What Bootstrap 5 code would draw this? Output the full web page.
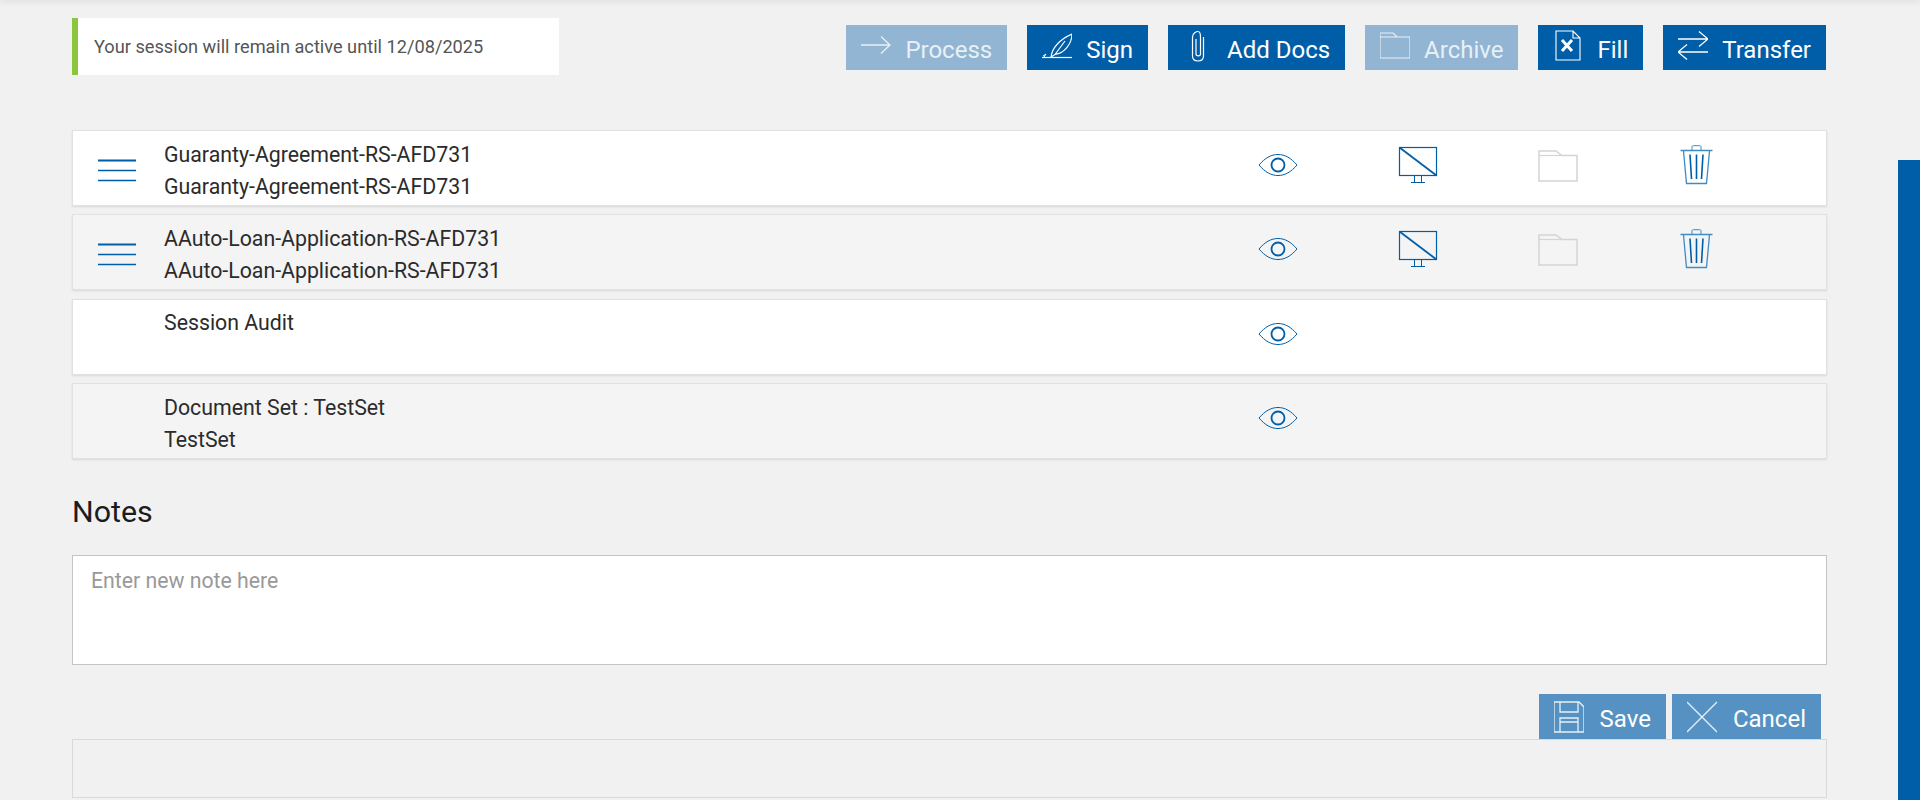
<!DOCTYPE html>
<html lang="en">
<head>
<meta charset="utf-8">
<title>Session documents</title>
<link href="https://cdn.jsdelivr.net/npm/bootstrap@5.3.0/dist/css/bootstrap.min.css" rel="stylesheet">
<style>
html,body{height:800px;overflow:hidden}
body{background:#f1f1f1;font-family:Roboto,"Liberation Sans",sans-serif;color:#2b2b2b}
.top-shade{height:0;box-shadow:0 0 6px 1px rgba(0,0,0,.18)}
.page-shell{height:800px}
.main-col{width:1898px;padding:0 71px 0 72px}
.rail-col{width:22px;padding-top:160px}
.rail-thumb{height:640px;background:#005ea8}
.head-row{height:130px;padding-top:18px}
.session-box{width:487px;height:57px;background:#fff;border-left:6px solid #8cc63f;padding-left:16px;font-size:18.2px;color:#555;line-height:57px}
.tool-row{gap:20px;padding:7px 1px 0 0}
.act-btn{--bs-btn-bg:#005ea8;--bs-btn-border-color:#005ea8;--bs-btn-hover-bg:#005ea8;--bs-btn-hover-border-color:#005ea8;--bs-btn-color:#fff;--bs-btn-hover-color:#fff;--bs-btn-disabled-bg:#92b5d3;--bs-btn-disabled-border-color:#92b5d3;--bs-btn-disabled-color:#e8f0f6;--bs-btn-disabled-opacity:1;--bs-btn-border-radius:0;--bs-btn-border-width:0;--bs-btn-padding-x:15px;--bs-btn-padding-y:0;--bs-btn-font-size:24px;--bs-btn-line-height:45px;height:45px;gap:14px;font-weight:400;white-space:nowrap}
.act-btn.soft{--bs-btn-bg:#5592c3;--bs-btn-border-color:#5592c3;--bs-btn-hover-bg:#5592c3;--bs-btn-hover-border-color:#5592c3;gap:16px}
.act-label{position:relative;top:3px}
.act-ico{width:30px;height:45px;flex:none;display:block}
.doc-row{display:grid;grid-template-columns:91px 1044px repeat(4,140px) 59px;height:76px;border:1px solid #e1e1e1;background:#fff;box-shadow:0 1px 2px rgba(0,0,0,.1);font-size:21.3px;line-height:32px;margin-bottom:8.4px}
.doc-row.alt{background:#f4f4f4}
.doc-text{padding-top:7.500px;white-space:nowrap}
.doc-ico{width:44px;height:40px;display:block;margin:14px auto 0}
.burger{width:40px;height:40px;display:block;margin:14px 0 0 24px}
.notes-title{font-size:30.4px;font-weight:400;line-height:40px;margin:0;padding-top:24.500px;color:#1c1c1c}
.note-box{height:110px;margin-top:23.300px;border:1px solid #c4c4c4;border-radius:0;font-size:21.25px;padding:9px 18px;resize:none;color:#333;box-shadow:none}
.note-box::placeholder{color:#999;opacity:1}
.save-row{gap:6px;padding:29px 6px 0 0}
.foot-box{height:59px;border:1px solid #d9d9d9;background:#f1f1f1}
</style>
</head>
<body>
<svg width="0" height="0" class="d-block">
  <defs>
    <symbol id="i-eye" viewBox="0 0 44 40">
      <path d="M3 20C9 13 15 9.500 22 9.500S35 13 41 20C35 27 29 30.500 22 30.500S9 27 3 20Z" fill="none" stroke="#005ea8" stroke-width="1"/>
      <circle cx="22" cy="20" r="6.500" fill="none" stroke="#005ea8" stroke-width="1.800"/>
    </symbol>
    <symbol id="i-screen" viewBox="0 0 44 40">
      <rect x="3.500" y="2.500" width="37" height="28" fill="none" stroke="#005ea8" stroke-width="1.200"/>
      <path d="M3.500 2.500L40.500 30.500" stroke="#005ea8" stroke-width="1.800"/>
      <path d="M18.500 30.500V37.500M25.500 30.500V37.500M15 37.500H29" stroke="#005ea8" stroke-width="1" fill="none"/>
    </symbol>
    <symbol id="i-folder" viewBox="0 0 44 40">
      <path d="M3 36V6H20L26 10.500H41V36Z" fill="none" stroke="#d4d4d4" stroke-width="1.500"/>
      <path d="M3 10.500H26" stroke="#d4d4d4" stroke-width="1.200"/>
    </symbol>
    <symbol id="i-trash" viewBox="0 0 44 40">
      <path d="M4.500 5.500H36.500M7.500 6L10.500 38.500H30.500L33.500 6" fill="none" stroke="#3f8bc4" stroke-width="1.300"/>
      <path d="M16 5V1.800C16 1 16.500 .700 17.500 .700H23.500C24.500 .700 25 1 25 1.800V5" fill="none" stroke="#3f8bc4" stroke-width="1"/>
      <path d="M14 9.500L15.500 34M20.500 9.500V34M27 9.500L25.500 34" stroke="#005ea8" stroke-width="1.600"/>
    </symbol>
    <symbol id="i-burger" viewBox="0 0 40 40">
      <path d="M1 15.500H39" stroke="#005ea8" stroke-width="2"/>
      <path d="M1 25.500H39M1 35.500H39" stroke="#005ea8" stroke-width="1.500"/>
    </symbol>
  </defs>
</svg>
<div class="top-shade"></div>
<div class="page-shell d-flex">
  <main class="main-col flex-shrink-0">
    <div class="head-row d-flex justify-content-between align-items-start">
      <div class="session-box">Your session will remain active until 12/08/2025</div>
      <div class="tool-row d-flex">
        <button type="button" class="btn act-btn d-flex disabled" disabled>
          <svg class="act-ico" viewBox="0 0 30 45"><path d="M0 20H29M20 11.500L29 20L20 28.500" fill="none" stroke="currentColor" stroke-width="1.300"/></svg>
          <span class="act-label">Process</span>
        </button>
        <button type="button" class="btn act-btn d-flex">
          <svg class="act-ico" viewBox="0 0 30 45"><path d="M0 32.500H30" stroke="#fff" stroke-width="1.200"/><path d="M1 31L4 29L2 32" fill="none" stroke="#fff" stroke-width="1"/><path d="M9 32C10 23 18 14 30 9C30 18 23 28 13 29.500L9 32M13 29.500L23 16" fill="none" stroke="#fff" stroke-width="1.200"/></svg>
          <span class="act-label">Sign</span>
        </button>
        <button type="button" class="btn act-btn d-flex">
          <svg class="act-ico" viewBox="0 0 30 45"><path d="M13 14V29C13 31.500 17.500 31.500 17.500 29V12C17.500 8 16.500 6.500 15 6.500S9.500 8 9.500 12V31C9.500 34.500 11.500 36 15 36S20.500 34.500 20.500 31V12" fill="none" stroke="#fff" stroke-width="1.200"/></svg>
          <span class="act-label">Add Docs</span>
        </button>
        <button type="button" class="btn act-btn d-flex disabled" disabled>
          <svg class="act-ico" viewBox="0 0 30 45"><path d="M0 33V8H13L17 12H30V33ZM0 12H17" fill="none" stroke="currentColor" stroke-width="1.200"/></svg>
          <span class="act-label">Archive</span>
        </button>
        <button type="button" class="btn act-btn d-flex">
          <svg class="act-ico" viewBox="0 0 30 45"><path d="M3 6H20L27 13V35H3ZM20 6V13H27" fill="none" stroke="#fff" stroke-width="1.100"/><path d="M9 15L19 26M19 15L9 26" stroke="#fff" stroke-width="3"/></svg>
          <span class="act-label">Fill</span>
        </button>
        <button type="button" class="btn act-btn d-flex">
          <svg class="act-ico" viewBox="0 0 30 45"><path d="M0 14H30M21 6.500L30 14L21 21.500M30 27H0M9 19.500L0 27L9 34.500" fill="none" stroke="#fff" stroke-width="1.300"/></svg>
          <span class="act-label">Transfer</span>
        </button>
      </div>
    </div>

    <div class="doc-row">
      <div><svg class="burger"><use href="#i-burger"/></svg></div>
      <div class="doc-text">Guaranty-Agreement-RS-AFD731<br>Guaranty-Agreement-RS-AFD731</div>
      <div><svg class="doc-ico"><use href="#i-eye"/></svg></div>
      <div><svg class="doc-ico"><use href="#i-screen"/></svg></div>
      <div><svg class="doc-ico"><use href="#i-folder"/></svg></div>
      <div><svg class="doc-ico"><use href="#i-trash"/></svg></div>
    </div>
    <div class="doc-row alt">
      <div><svg class="burger"><use href="#i-burger"/></svg></div>
      <div class="doc-text">AAuto-Loan-Application-RS-AFD731<br>AAuto-Loan-Application-RS-AFD731</div>
      <div><svg class="doc-ico"><use href="#i-eye"/></svg></div>
      <div><svg class="doc-ico"><use href="#i-screen"/></svg></div>
      <div><svg class="doc-ico"><use href="#i-folder"/></svg></div>
      <div><svg class="doc-ico"><use href="#i-trash"/></svg></div>
    </div>
    <div class="doc-row">
      <div></div>
      <div class="doc-text">Session Audit</div>
      <div><svg class="doc-ico"><use href="#i-eye"/></svg></div>
    </div>
    <div class="doc-row alt">
      <div></div>
      <div class="doc-text">Document Set : TestSet<br>TestSet</div>
      <div><svg class="doc-ico"><use href="#i-eye"/></svg></div>
    </div>

    <h2 class="notes-title">Notes</h2>
    <textarea class="form-control note-box" placeholder="Enter new note here"></textarea>
    <div class="save-row d-flex justify-content-end">
      <button type="button" class="btn act-btn soft d-flex">
        <svg class="act-ico" viewBox="0 0 30 45"><path d="M0 8H25L30 13V38H0ZM6 8V18H24V8M6 38V24H24V38M6 28H24" fill="none" stroke="#e8f1f8" stroke-width="1.300"/></svg>
        <span class="act-label">Save</span>
      </button>
      <button type="button" class="btn act-btn soft d-flex">
        <svg class="act-ico" viewBox="0 0 30 45"><path d="M0 8L30 38M30 8L0 38" fill="none" stroke="#e8f1f8" stroke-width="1.300"/></svg>
        <span class="act-label">Cancel</span>
      </button>
    </div>
    <div class="foot-box"></div>
  </main>
  <div class="rail-col flex-shrink-0"><div class="rail-thumb"></div></div>
</div>
<script src="https://cdn.jsdelivr.net/npm/bootstrap@5.3.0/dist/js/bootstrap.bundle.min.js"></script>
</body>
</html>
